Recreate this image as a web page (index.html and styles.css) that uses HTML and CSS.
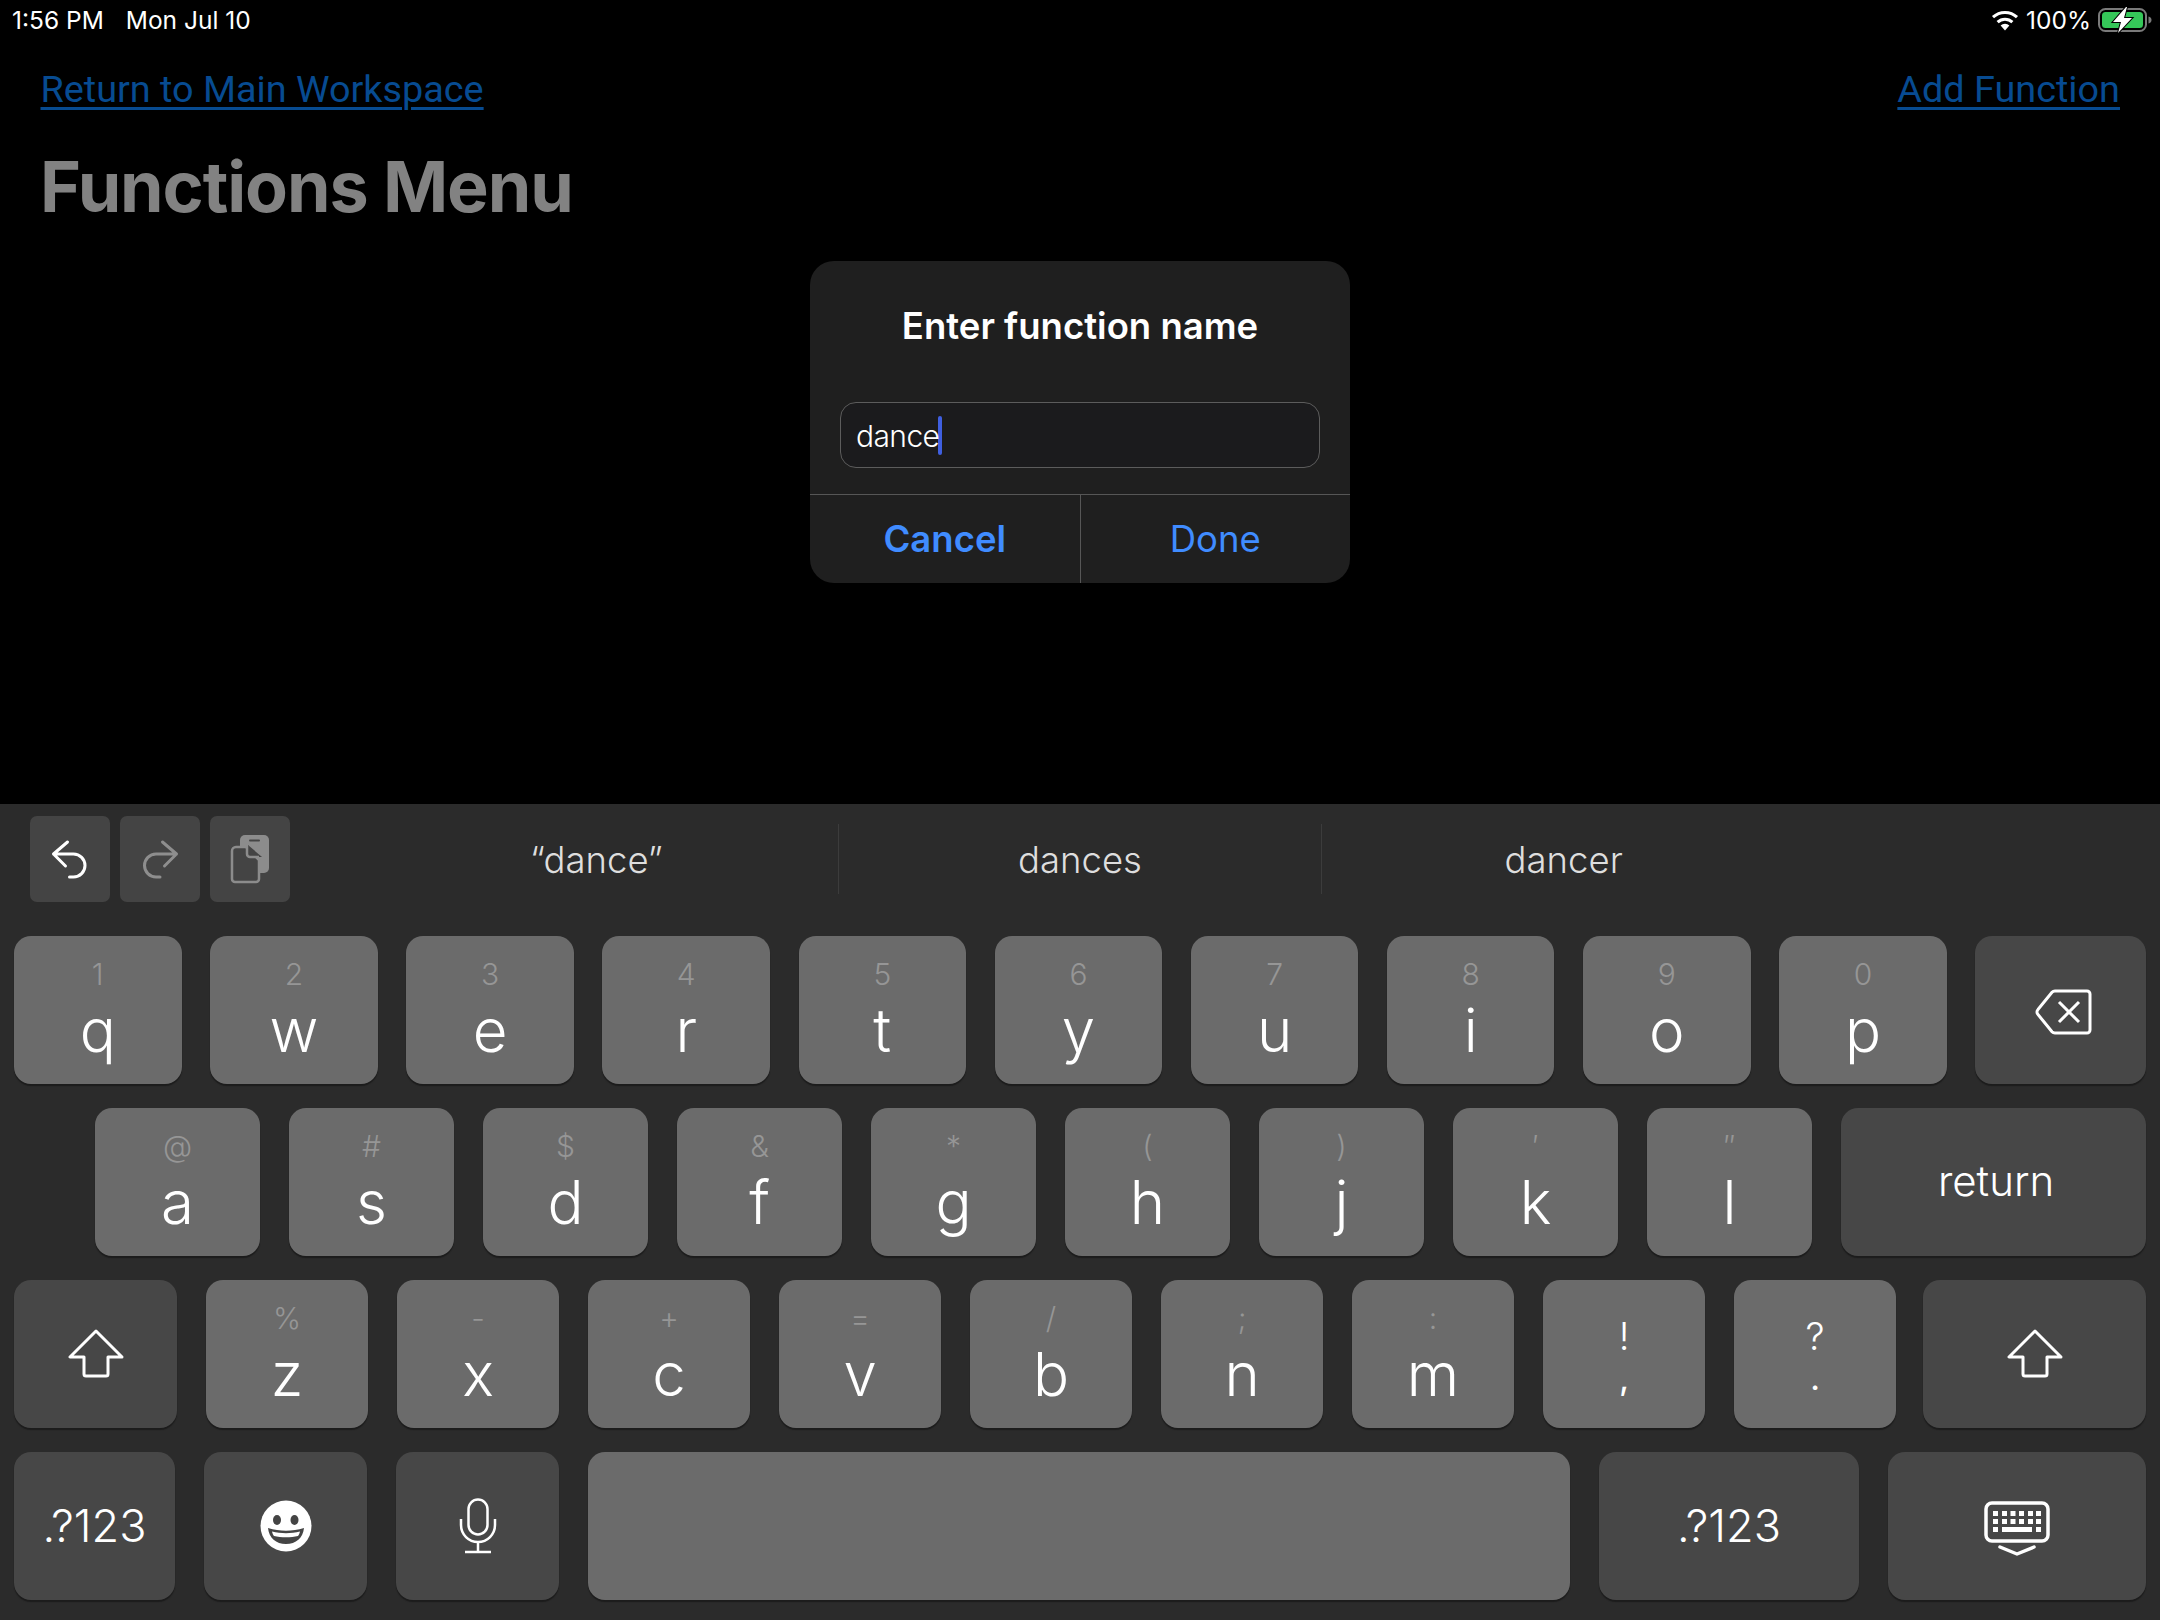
FILE: index.html
```html
<!DOCTYPE html>
<html lang="en">
<head>
<meta charset="utf-8">
<title>Functions Menu</title>
<link rel="stylesheet" href="styles.css">
</head>
<body>
<div class="screen">
  <main class="page">
    <header class="status">
      <div class="status-left"><span>1:56 PM</span><span>Mon Jul 10</span></div>
      <div class="status-right">
        <svg class="wifi" width="28" height="21" viewBox="0 0 28 21"><path d="M14 20.5 9.6 15.6a6.4 6.4 0 0 1 8.8 0Z" fill="#fff"/><path d="M6.6 12.2a10.8 10.8 0 0 1 14.8 0" fill="none" stroke="#fff" stroke-width="3"/><path d="M2 7.2a17.4 17.4 0 0 1 24 0" fill="none" stroke="#fff" stroke-width="3"/></svg>
        <span class="pct">100%</span>
        <svg class="battery" width="54" height="26" viewBox="0 0 54 26"><rect x="1" y="2" width="47" height="22" rx="6.5" fill="none" stroke="#7a7a7a" stroke-width="2"/><rect x="4" y="5" width="41" height="16" rx="3.5" fill="#35c759"/><path d="M50.5 9.5c2 .5 3 1.800 3 3.500s-1 3-3 3.500Z" fill="#7a7a7a"/><path d="M28 0 15 15h8l-3 11 14-15h-8l3-11Z" fill="#fff" stroke="#000" stroke-width="2" paint-order="stroke"/></svg>
      </div>
    </header>
    <nav class="links"><a href="#">Return to Main Workspace</a><a href="#">Add Function</a></nav>
    <h1 class="title">Functions Menu</h1>

    <section class="dialog">
      <h2 class="dialog-title">Enter function name</h2>
      <div class="field"><span class="field-text">dance</span><i class="caret"></i></div>
      <div class="actions"><button class="action action-strong">Cancel</button><button class="action">Done</button></div>
    </section>
  </main>

  <section class="keyboard">
    <div class="toolbar">
      <div class="tools">
        <div class="tool"><svg width="80" height="86" viewBox="0 0 80 86"><path d="M37.500 26 23.500 38l12 12M23.500 38h20a11.500 11.500 0 0 1 0 23h-4" fill="none" stroke="#fff" stroke-width="3" stroke-linecap="round" stroke-linejoin="round"/></svg></div>
        <div class="tool"><svg width="80" height="86" viewBox="0 0 80 86"><path d="M42.500 26 56.500 38l-12 12M56.500 38H36a11.500 11.500 0 0 0 0 23h4" fill="none" stroke="#8e8e8e" stroke-width="3" stroke-linecap="round" stroke-linejoin="round"/></svg></div>
        <div class="tool"><svg width="80" height="86" viewBox="0 0 80 86"><rect x="30" y="19" width="29" height="38" rx="5" fill="#8c8c8c"/><rect x="39" y="23.500" width="11" height="2" rx="1" fill="#444"/><path d="M26 31h10l13 13v19a3 3 0 0 1-3 3H25a3 3 0 0 1-3-3V35a4 4 0 0 1 4-4Z" fill="#444" stroke="#8c8c8c" stroke-width="2.500"/><path d="M38 29 52 41H39a1 1 0 0 1-1-1Z" fill="#444"/><path d="M37 30v8a3 3 0 0 0 3 3h9" fill="none" stroke="#8c8c8c" stroke-width="2.500"/></svg></div>
      </div>
      <div class="suggestions">
        <span class="suggestion">“dance”</span>
        <span class="suggestion">dances</span>
        <span class="suggestion">dancer</span>
      </div>
    </div>

    <div class="row row-1">
      <div class="key"><span class="hint">1</span><span class="letter">q</span></div>
      <div class="key"><span class="hint">2</span><span class="letter">w</span></div>
      <div class="key"><span class="hint">3</span><span class="letter">e</span></div>
      <div class="key"><span class="hint">4</span><span class="letter">r</span></div>
      <div class="key"><span class="hint">5</span><span class="letter">t</span></div>
      <div class="key"><span class="hint">6</span><span class="letter">y</span></div>
      <div class="key"><span class="hint">7</span><span class="letter">u</span></div>
      <div class="key"><span class="hint">8</span><span class="letter">i</span></div>
      <div class="key"><span class="hint">9</span><span class="letter">o</span></div>
      <div class="key"><span class="hint">0</span><span class="letter">p</span></div>
      <div class="key key-dark key-center"><svg class="icon-delete" width="58" height="48" viewBox="0 0 58 48"><path d="M21 3h32a3 3 0 0 1 3 3v36a3 3 0 0 1-3 3H21a4 4 0 0 1-3-1.300L4 26.500a3.500 3.500 0 0 1 0-5L18 4.300A4 4 0 0 1 21 3Z" fill="none" stroke="#fff" stroke-width="3"/><path d="m25 14 20 20M45 14 25 34" fill="none" stroke="#fff" stroke-width="3"/></svg></div>
    </div>

    <div class="row row-2">
      <div class="key"><span class="hint">@</span><span class="letter">a</span></div>
      <div class="key"><span class="hint">#</span><span class="letter">s</span></div>
      <div class="key"><span class="hint">$</span><span class="letter">d</span></div>
      <div class="key"><span class="hint">&amp;</span><span class="letter">f</span></div>
      <div class="key"><span class="hint">*</span><span class="letter">g</span></div>
      <div class="key"><span class="hint">(</span><span class="letter">h</span></div>
      <div class="key"><span class="hint">)</span><span class="letter">j</span></div>
      <div class="key"><span class="hint">′</span><span class="letter">k</span></div>
      <div class="key"><span class="hint">″</span><span class="letter">l</span></div>
      <div class="key key-dark key-center key-return">return</div>
    </div>

    <div class="row row-3">
      <div class="key key-dark key-center"><svg width="58" height="50" viewBox="0 0 58 50"><path class="shift-path" d="M29 2 3 28h14v17a2 2 0 0 0 2 2h20a2 2 0 0 0 2-2V28h14Z"/></svg></div>
      <div class="key"><span class="hint">%</span><span class="letter">z</span></div>
      <div class="key"><span class="hint">-</span><span class="letter">x</span></div>
      <div class="key"><span class="hint">+</span><span class="letter">c</span></div>
      <div class="key"><span class="hint">=</span><span class="letter">v</span></div>
      <div class="key"><span class="hint">/</span><span class="letter">b</span></div>
      <div class="key"><span class="hint">;</span><span class="letter">n</span></div>
      <div class="key"><span class="hint">:</span><span class="letter">m</span></div>
      <div class="key key-punct"><span class="punct-top">!</span><span class="punct-bottom">,</span></div>
      <div class="key key-punct"><span class="punct-top">?</span><span class="punct-bottom">.</span></div>
      <div class="key key-dark key-center key-shift-end"><svg width="58" height="50" viewBox="0 0 58 50"><path class="shift-path" d="M29 2 3 28h14v17a2 2 0 0 0 2 2h20a2 2 0 0 0 2-2V28h14Z"/></svg></div>
    </div>

    <div class="row row-4">
      <div class="key key-dark key-center key-numbers">.?123</div>
      <div class="key key-dark key-center"><svg width="52" height="52" viewBox="0 0 52 52"><circle cx="26" cy="26" r="25.500" fill="#fff"/><ellipse cx="17" cy="20" rx="4" ry="5" fill="#444"/><ellipse cx="34.500" cy="20" rx="4" ry="5" fill="#444"/><path d="M8 28c12 3.500 24 3.500 36 0-1 10-8 16-18 16S9 38 8 28Z" fill="#444"/><path d="M12 31.500c9 2.200 19 2.200 28 0-.5 2-1.200 3.500-2 4.500-7 1.700-17 1.700-24 0-.8-1-1.500-2.500-2-4.500Z" fill="#fff"/></svg></div>
      <div class="key key-dark key-center"><svg width="38" height="56" viewBox="0 0 38 56" fill="none" stroke="#fff" stroke-width="2.500"><rect x="9.500" y="1.500" width="19" height="35" rx="9.500"/><path d="M2 21v6a17 17 0 0 0 34 0v-6M19 44v10M6 54h26"/></svg></div>
      <div class="key"></div>
      <div class="key key-dark key-center key-numbers">.?123</div>
      <div class="key key-dark key-center"><svg class="icon-keyboard" width="66" height="56" viewBox="0 0 66 56"><rect x="2" y="2" width="62" height="38" rx="6" fill="none" stroke="#fff" stroke-width="3.500"/><g fill="#fff"><rect x="9" y="10" width="5" height="5"/><rect x="18" y="10" width="5" height="5"/><rect x="26.500" y="10" width="5" height="5"/><rect x="35" y="10" width="5" height="5"/><rect x="44" y="10" width="5" height="5"/><rect x="52" y="10" width="5" height="5"/><rect x="9" y="18" width="5" height="5"/><rect x="18" y="18" width="5" height="5"/><rect x="26.500" y="18" width="5" height="5"/><rect x="35" y="18" width="5" height="5"/><rect x="44" y="18" width="5" height="5"/><rect x="52" y="18" width="5" height="5"/><rect x="9" y="26" width="5" height="5"/><rect x="18" y="26" width="30" height="5"/><rect x="52" y="26" width="5" height="5"/></g><path d="m16 46 17 7 17-7" fill="none" stroke="#fff" stroke-width="3.500" stroke-linecap="round" stroke-linejoin="round"/></svg></div>
    </div>
  </section>
</div>
</body>
</html>
```
FILE: styles.css
```css
* { box-sizing: border-box; }
html, body { margin: 0; padding: 0; }
body { background: #000; color: #fff; font-family: Inter, "Liberation Sans", sans-serif; overflow: hidden; }
.screen { display: flex; flex-direction: column; width: 2160px; height: 1620px; }

.page { position: relative; height: 804px; flex: none; }
.status { display: flex; justify-content: space-between; align-items: center; height: 40px; padding: 0 8px 0 12px; font-size: 24.500px; }
.status-left { display: flex; gap: 22px; }
.status-right { display: flex; align-items: center; gap: 7px; }
.pct { font-size: 24.500px; }
.wifi, .battery { display: block; }

.links { display: flex; justify-content: space-between; padding: 26px 40px 0 40.500px; font-family: Roboto, "Liberation Sans", sans-serif; font-size: 37.800px; font-weight: 400; line-height: 46px; }
.links a { color: #074b91; text-decoration: underline; text-decoration-thickness: 3px; text-underline-offset: 5px; }
.title { margin: 33px 0 0 40px; font-size: 70px; line-height: 84px; font-weight: 700; color: #828282; letter-spacing: -1.100px; }

.dialog { position: absolute; left: 810px; top: 261px; width: 540px; height: 322px; border-radius: 24px; background: #1f1f1f; display: flex; flex-direction: column; align-items: center; }
.dialog-title { margin: 42px 0 0; font-size: 36.500px; line-height: 46px; font-weight: 600; }
.field { display: flex; align-items: center; width: 480px; height: 66px; margin-top: 53px; padding-left: 15px; border: 1.500px solid #5c5c5c; border-radius: 16px; background: #1b1b1d; font-size: 30px; font-weight: 300; letter-spacing: -0.600px; }
.field-text { position: relative; top: 1px; }
.caret { width: 4px; height: 39px; margin-left: -1px; border-radius: 2px; background: #3f5fe0; }
.actions { display: flex; width: 100%; height: 89px; margin-top: 26px; border-top: 1.500px solid #565656; }
.action { flex: 1; border: 0; background: none; color: #408cff; font: 400 36.500px Inter, "Liberation Sans", sans-serif; padding: 0; }
.action-strong { font-weight: 600; border-right: 1.500px solid #565656; }

.keyboard { flex: 1; display: flex; flex-direction: column; gap: 24px; padding: 12px 14px 0; background: #2b2b2b; }
.toolbar { display: flex; height: 96px; padding-left: 16px; align-items: flex-start; }
.tools { display: flex; gap: 10px; }
.tool { width: 80px; height: 86px; border-radius: 7px; background: #444; }
.tool svg { display: block; }
.suggestions { display: flex; width: 1450px; margin-left: 65px; height: 86px; align-items: center; }
.suggestion { flex: 1; text-align: center; font-size: 36.500px; font-weight: 300; color: #dedede; height: 70px; line-height: 72px; border-left: 1.500px solid #3c3c3c; }
.suggestion:first-child { border-left: 0; }

.row { display: grid; height: 148px; flex: none; }
.row-1 { grid-template-columns: repeat(10, 167.500px) 1fr; column-gap: 28.650px; }
.row-2 { grid-template-columns: repeat(9, 165px) 1fr; column-gap: 29px; padding-left: 81px; }
.row-3 { grid-template-columns: 163.300px repeat(9, 162.300px) 1fr; column-gap: 28.700px; }
.row-4 { grid-template-columns: 161px 163px 163px 982px 260px 1fr; column-gap: 29px; }

.key { display: flex; flex-direction: column; align-items: center; border-radius: 17px; background: #6b6b6b; box-shadow: 0 2px 1px #1c1c1c; padding-top: 23px; }
.key-dark { background: #474747; }
.key-center { justify-content: center; padding-top: 0; }
.key-shift-end { margin-left: -1.500px; }
.key svg { display: block; }
.icon-delete { margin: 3px 0 0 5px; }
.icon-keyboard { margin-top: 5px; }
.hint { font-size: 30px; line-height: 30px; font-weight: 300; color: #969696; }
.letter { margin-top: 11px; font-size: 60px; line-height: 60px; font-weight: 300; color: #fff; }
.key-return { font-size: 42px; font-weight: 300; color: #fff; padding: 0 0 4px 5px; }
.key-numbers { font-size: 45px; font-weight: 300; color: #fff; padding-bottom: 2px; }
.key-punct { padding-top: 0; }
.punct-top { margin-top: 33px; font-size: 38px; line-height: 46px; font-weight: 300; }
.punct-bottom { font-size: 32px; line-height: 39px; font-weight: 500; }
.shift-path { fill: none; stroke: #fff; stroke-width: 3; stroke-linejoin: round; }
```
